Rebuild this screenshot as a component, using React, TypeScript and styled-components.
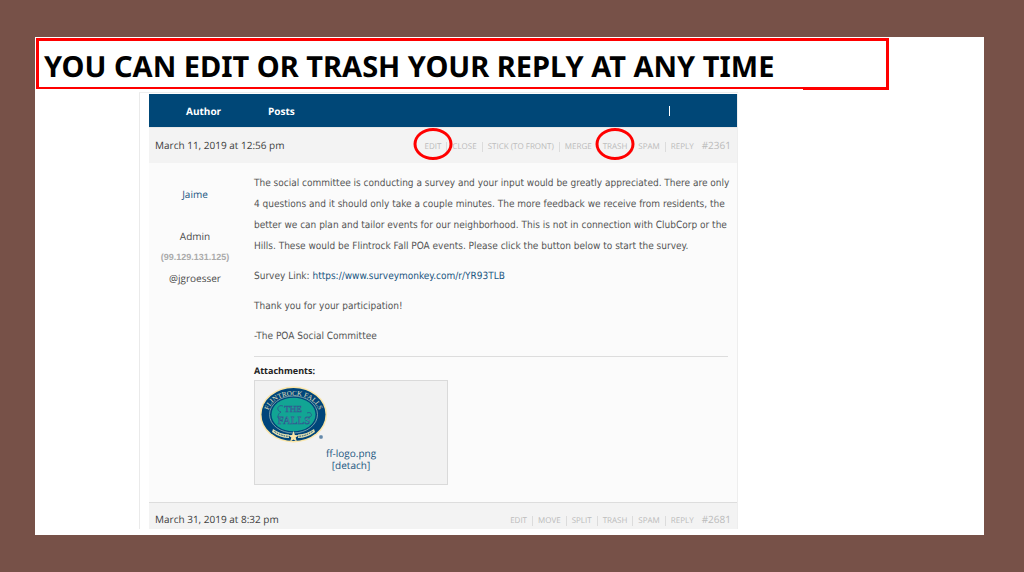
import React from 'react';
import styled, { createGlobalStyle } from 'styled-components';

const GlobalStyle = createGlobalStyle`
  *, *::before, *::after { box-sizing: border-box; }
  body {
    margin: 0;
    background: #775148;
    font-family: "Open Sans", "Noto Sans", sans-serif;
    color: #4a4a4a;
    text-rendering: geometricPrecision;
  }
  p, h1, h2, ul { margin: 0; padding: 0; }
  a { color: inherit; text-decoration: none; }
`;

const Page = styled.div`
  min-height: 100vh;
  padding: 37px 40px 37px 35px;
`;

const Slide = styled.main`
  background: #fff;
  padding: 1px 0 6px 1px;
`;

const Banner = styled.header`
  position: relative;
  width: 90%;
  height: 51px;
  padding: 0 5px;
  border: 3px solid #f00;
  border-bottom-width: 2px;
  background: #fff;

  &::after {
    content: "";
    position: absolute;
    right: -3px;
    bottom: -3px;
    width: 86px;
    height: 3px;
    background: #f00;
  }
`;

const Title = styled.h1`
  font-family: "Noto Sans", "Open Sans", sans-serif;
  font-size: 29px;
  font-weight: 700;
  line-height: 52px;
  color: #000;
  white-space: nowrap;
`;

const Forum = styled.section`
  max-width: 599px;
  margin: 3px 0 0 103px;
  padding: 1px 0 0 9px;
  border-left: 1px solid #eaeaea;
  border-top: 1px solid #eee;
`;

const Table = styled.div`
  border-right: 1px solid #eee;
`;

const HeadRow = styled.div`
  display: flex;
  align-items: center;
  height: 33px;
  background: #004777;
  color: #fff;
  font-size: 10px;
  font-weight: 700;
`;

const AuthorHead = styled.span`
  width: 119px;
  padding-left: 37px;
`;

const PostsHead = styled.span`
  flex: 1;
`;

const Caret = styled.span`
  width: 1px;
  height: 10px;
  margin-right: 67px;
  background: #fff;
`;

const MetaRow = styled.div<{ $tall?: boolean }>`
  display: flex;
  align-items: center;
  justify-content: space-between;
  height: ${(p) => (p.$tall ? 36 : 27)}px;
  padding: ${(p) => (p.$tall ? '0 6px 1px' : '6px 6px 0')};
  background: #f3f3f3;
  border-top: 1px solid ${(p) => (p.$tall ? '#e8e8e8' : '#ddd')};
`;

const PostDate = styled.time`
  font-size: 10px;
  line-height: 14px;
  color: #404040;
`;

const Actions = styled.div`
  display: flex;
  align-items: baseline;
  color: #bbb;
`;

const ActionList = styled.ul`
  display: flex;
  list-style: none;
  font-size: 8px;
  line-height: 10px;
  text-transform: uppercase;
`;

const ActionItem = styled.li`
  position: relative;
  padding: 0 5px;

  & + & { border-left: 1px solid #dcdcdc; }
`;

const Ring = styled.span`
  position: absolute;
  z-index: 1;
  top: 20%;
  left: 50%;
  width: 39px;
  height: 32px;
  transform: translate(-50%, -50%);
  border: 3px solid #f00;
  border-radius: 50%;
  pointer-events: none;
`;

const Permalink = styled.a`
  margin-left: 3px;
  font-size: 10px;
  line-height: 14px;
`;

const Post = styled.article`
  display: flex;
  min-height: 339px;
  padding: 10px 9px 17px 0;
  background: #fbfbfb;
`;

const Author = styled.aside`
  display: flex;
  flex-direction: column;
  align-items: center;
  flex: none;
  width: 92px;
  margin-right: 13px;
  padding-top: 11px;
  font-size: 10px;
  line-height: 21px;
`;

const AuthorName = styled.a`
  margin-bottom: 21px;
  color: #20557f;
`;

const Address = styled.span`
  font-family: "Liberation Sans", Arial, sans-serif;
  font-size: 9px;
  font-weight: 700;
  color: #aaa;
`;

const Content = styled.div`
  flex: 1;
  min-width: 0;
`;

const Paragraph = styled.p`
  margin: 0 -8px 9px 0;
  font-family: "DejaVu Sans Condensed", "Open Sans", sans-serif;
  font-size: 10px;
  line-height: 21px;
  color: #555;
`;

const TextLink = styled.a`
  color: #20557f;
`;

const Attachments = styled.section`
  padding-top: 4px;
  border-top: 1px solid #ddd;
`;

const AttachmentsTitle = styled.h2`
  font-size: 9px;
  font-weight: 700;
  line-height: 19px;
  color: #222;
`;

const Attachment = styled.figure`
  width: 194px;
  height: 105px;
  margin: 0;
  padding: 5px;
  border: 1px solid #dadada;
  background: #f2f2f2;
`;

const Caption = styled.figcaption`
  display: flex;
  flex-direction: column;
  align-items: center;
  margin-top: 4px;
  font-size: 10px;
  line-height: 12px;
  color: #20557f;
`;

const Logo = styled.svg`
  display: block;
`;

function FallsLogo() {
  return (
    <Logo width="68" height="57" viewBox="0 0 68 57" role="img" aria-label="Flintrock Falls">
      <defs>
        <path id="arc" d="M8 29 C8 3 59 3 59 29" />
      </defs>
      <ellipse cx="33.500" cy="28.500" rx="33.500" ry="28" fill="#fbe6a8" />
      <ellipse cx="33.500" cy="28.500" rx="32" ry="26.500" fill="#00457a" />
      <ellipse cx="33.500" cy="28.500" rx="24" ry="18.500" fill="none" stroke="#8fb3b5" strokeWidth="0.800" />
      <ellipse cx="33.500" cy="28.500" rx="22" ry="16.800" fill="#12a594" />
      <text fontFamily="Liberation Serif, serif" fontSize="7" fill="#e3e0bd">
        <textPath href="#arc" startOffset="50%" textAnchor="middle">FLINTROCK FALLS</textPath>
      </text>
      <g fontFamily="Liberation Serif, serif" fill="#62aeb0" stroke="#295b8f" strokeWidth="0.600" textAnchor="middle">
        <text x="33" y="26" fontSize="9">THE</text>
        <text x="34" y="38" fontSize="11">FALLS</text>
      </g>
      <path d="M23 20 C17 18 16 25 21 26 C17 28 17 34 21 33 M47 27 C52 25 53 31 49 31" fill="none" stroke="#295b8f" strokeWidth="0.900" />
      <path d="M13 43 Q20 48 29 48.500 V52 Q20 52 12 46 Z M54 43 Q47 48 38 48.500 V52 Q47 52 55 46 Z" fill="#dedcae" />
      <path d="M14.500 45.500 Q22 50.500 29 50.200 M52.500 45.500 Q45 50.500 38 50.200" fill="none" stroke="#00457a" strokeWidth="1" strokeDasharray="1.500 1" />
      <path d="M33.500 45 L34.900 49 L38.800 49.200 L35.700 51.600 L36.800 55.600 L33.500 53.400 L30.200 55.600 L31.300 51.600 L28.200 49.200 L32.100 49 Z" fill="#fbe6a8" />
      <circle cx="61" cy="51" r="2" fill="#7898b5" />
      <circle cx="61" cy="51" r="0.800" fill="#4d769c" />
    </Logo>
  );
}

interface MetaProps {
  date: string;
  id: string;
  actions: string[];
  ringed?: string[];
  tall?: boolean;
}

function PostMeta({ date, id, actions, ringed = [], tall }: MetaProps) {
  return (
    <MetaRow $tall={tall}>
      <PostDate>{date}</PostDate>
      <Actions>
        <ActionList>
          {actions.map((action) => (
            <ActionItem key={action}>
              <a href="#action">{action}</a>
              {ringed.includes(action) && <Ring />}
            </ActionItem>
          ))}
        </ActionList>
        <Permalink href="#post">{id}</Permalink>
      </Actions>
    </MetaRow>
  );
}

export default function App() {
  return (
    <Page>
      <GlobalStyle />
      <Slide>
        <Banner>
          <Title>YOU CAN EDIT OR TRASH YOUR REPLY AT ANY TIME</Title>
        </Banner>
        <Forum>
          <Table>
            <HeadRow>
              <AuthorHead>Author</AuthorHead>
              <PostsHead>Posts</PostsHead>
              <Caret />
            </HeadRow>
            <PostMeta
              tall
              date="March 11, 2019 at 12:56 pm"
              id="#2361"
              actions={['Edit', 'Close', 'Stick (to front)', 'Merge', 'Trash', 'Spam', 'Reply']}
              ringed={['Edit', 'Trash']}
            />
            <Post>
              <Author>
                <AuthorName href="#author">Jaime</AuthorName>
                <span>Admin</span>
                <Address>(99.129.131.125)</Address>
                <span>@jgroesser</span>
              </Author>
              <Content>
                <Paragraph>
                  The social committee is conducting a survey and your input would be greatly appreciated. There are only
                  4 questions and it should only take a couple minutes. The more feedback we receive from residents, the
                  better we can plan and tailor events for our neighborhood. This is not in connection with ClubCorp or the
                  Hills. These would be Flintrock Fall POA events. Please click the button below to start the survey.
                </Paragraph>
                <Paragraph>
                  Survey Link:{' '}
                  <TextLink href="https://www.surveymonkey.com/r/YR93TLB">https://www.surveymonkey.com/r/YR93TLB</TextLink>
                </Paragraph>
                <Paragraph>Thank you for your participation!</Paragraph>
                <Paragraph>-The POA Social Committee</Paragraph>
                <Attachments>
                  <AttachmentsTitle>Attachments:</AttachmentsTitle>
                  <Attachment>
                    <FallsLogo />
                    <Caption>
                      <a href="#file">ff-logo.png</a>
                      <a href="#detach">[detach]</a>
                    </Caption>
                  </Attachment>
                </Attachments>
              </Content>
            </Post>
            <PostMeta
              date="March 31, 2019 at 8:32 pm"
              id="#2681"
              actions={['Edit', 'Move', 'Split', 'Trash', 'Spam', 'Reply']}
            />
          </Table>
        </Forum>
      </Slide>
    </Page>
  );
}
